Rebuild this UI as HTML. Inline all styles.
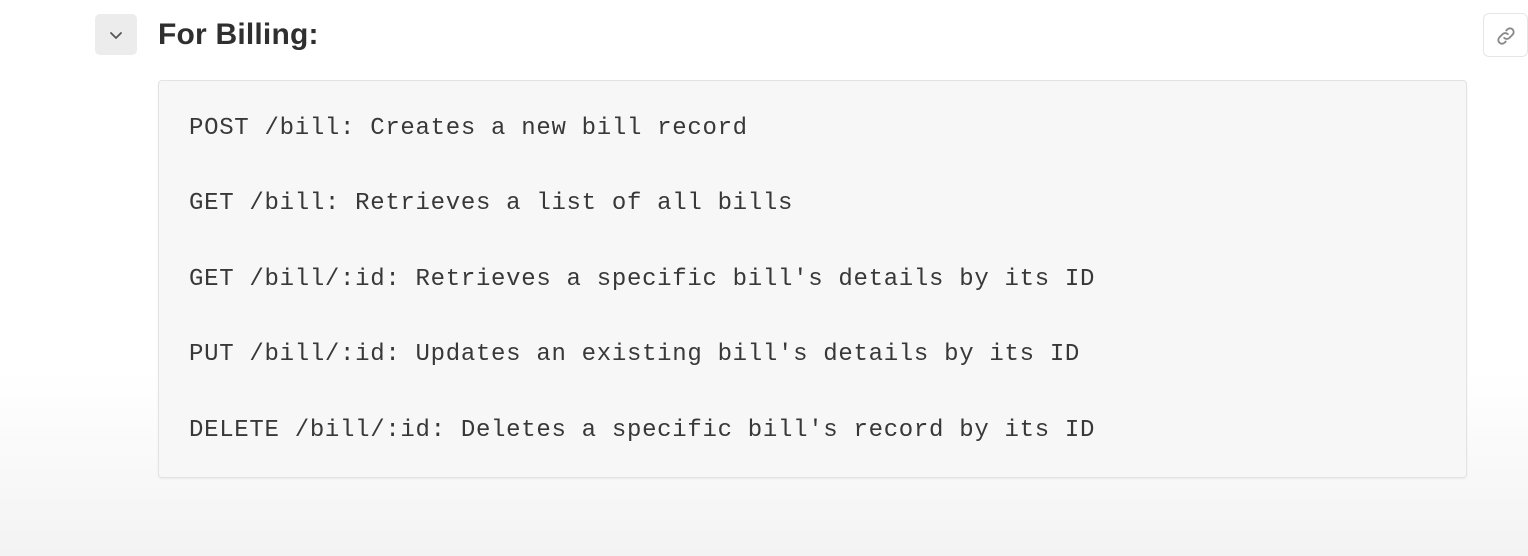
<!DOCTYPE html>
<html><head><style>
html,body{margin:0;padding:0;}
body{width:1528px;height:556px;overflow:hidden;position:relative;background:linear-gradient(to bottom,#fff 0,#fff 370px,#f3f3f3 556px);font-family:"Liberation Sans",sans-serif;}
.chev{position:absolute;left:95px;top:14px;width:42px;height:41px;background:#ececec;border-radius:5px;}
.chev svg{position:absolute;left:13px;top:13px;}
h1{position:absolute;left:158px;top:14px;margin:0;font-size:30px;font-weight:bold;color:#2f2f2f;line-height:42px;letter-spacing:0.2px;}
.link{position:absolute;left:1483px;top:13px;width:45px;height:44px;border:1px solid #e6e6e6;border-radius:6px;background:#fff;box-sizing:border-box;}
.link svg{position:absolute;left:11px;top:11px;}
.code{position:absolute;left:158px;top:80px;width:1309px;height:398px;box-sizing:border-box;background:#f7f7f7;border:1px solid #e3e3e3;border-radius:4px;box-shadow:0 1px 2px rgba(0,0,0,0.06);}
.code div{position:absolute;left:30px;font-family:"Liberation Mono",monospace;font-size:24px;letter-spacing:0.7px;color:#383838;white-space:pre;line-height:30px;}
</style></head><body>
<div class="chev"><svg width="16" height="16" viewBox="0 0 16 16"><path d="M3 6l5 5 5-5" fill="none" stroke="#555" stroke-width="1.8" stroke-linecap="round" stroke-linejoin="round"/></svg></div>
<h1>For Billing:</h1>
<div class="link"><svg width="22" height="22" viewBox="0 0 24 24"><g fill="none" stroke="#888" stroke-width="2" stroke-linecap="round"><path d="M10 14a4 4 0 0 0 5.7 0l3.5-3.5a4 4 0 0 0-5.7-5.7l-1.2 1.2"/><path d="M14 10a4 4 0 0 0-5.7 0l-3.5 3.5a4 4 0 0 0 5.7 5.7l1.2-1.2"/></g></svg></div>
<div class="code">
<div style="top:33px">POST /bill: Creates a new bill record</div>
<div style="top:108px">GET /bill: Retrieves a list of all bills</div>
<div style="top:184px">GET /bill/:id: Retrieves a specific bill's details by its ID</div>
<div style="top:259px">PUT /bill/:id: Updates an existing bill's details by its ID</div>
<div style="top:335px">DELETE /bill/:id: Deletes a specific bill's record by its ID</div>
</div>
</body></html>
